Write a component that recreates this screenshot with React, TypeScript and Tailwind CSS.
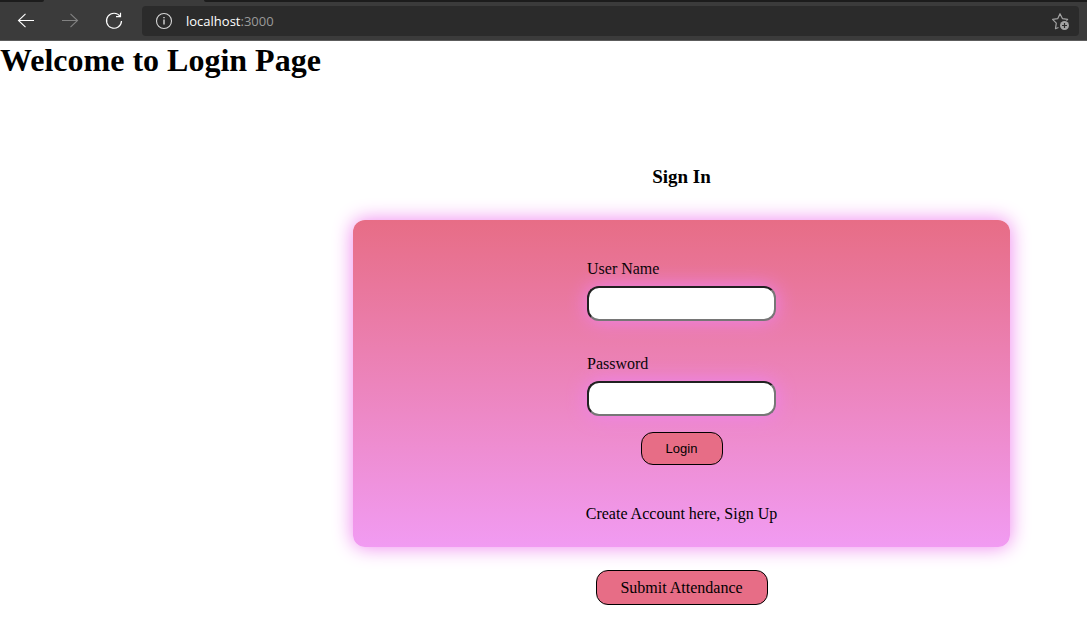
import React from 'react';

function BrowserBar() {
  return (
    <header className="bg-[#3b3b3b] border-b border-[#5c5c5c]">
      <div className="flex h-0.5">
        <div className="w-11 rounded-br-sm bg-[#1c1c1c]" />
        <div className="w-40" />
        <div className="flex-1 rounded-bl-sm bg-[#1c1c1c]" />
      </div>
      <div className="flex h-[38px] items-center pr-2 pl-4">
        <nav className="flex gap-6">
          <button type="button" aria-label="Back" className="text-white">
            <svg width="20" height="20" viewBox="0 0 20 20" fill="none" stroke="currentColor" strokeWidth="1.1">
              <path d="M18 9.5H2.5M9.5 2.8l-7 6.7 7 6.7" />
            </svg>
          </button>
          <button type="button" aria-label="Forward" className="text-[#828282]">
            <svg width="20" height="20" viewBox="0 0 20 20" fill="none" stroke="currentColor" strokeWidth="1.1">
              <path d="M2 9.5h15.5M10.5 2.8l7 6.7-7 6.7" />
            </svg>
          </button>
          <button type="button" aria-label="Refresh" className="text-white">
            <svg width="20" height="20" viewBox="0 0 20 20" fill="none" stroke="currentColor" strokeWidth="1.2">
              <path d="M16.2 5.5A7.5 7.5 0 1 0 17.500 10M16.500 1.800V5.700H12" />
            </svg>
          </button>
        </nav>
        <div className="ml-[18px] flex h-[30px] flex-1 items-center rounded bg-[#2b2b2b] pr-2 pl-3">
          <svg width="20" height="20" viewBox="0 0 20 20" fill="none" stroke="#d6d6d6" strokeWidth="1.1">
            <circle cx="10" cy="10" r="7.5" />
            <path d="M10 8.5v5M10 6v1.3" strokeWidth="1.4" />
          </svg>
          <p className="ml-3 flex-1 font-['Open_Sans','Noto_Sans',sans-serif] text-[13px] leading-5 text-white">
            localhost<span className="text-[#9a9a9a]">:3000</span>
          </p>
          <button type="button" aria-label="Add to favorites" className="text-[#a3a3a3]">
            <svg width="20" height="20" viewBox="0 0 20 20" fill="none" stroke="currentColor" strokeWidth="1.2" strokeLinejoin="round">
              <path d="M7.5 16.5l-3 1.2.8-5.600-3.700-3.700 5.200-.8L9 2.700l2.400 4.900 5.200.8-1.100 1.200" />
              <circle cx="13.5" cy="14.5" r="4.5" fill="currentColor" stroke="none" />
              <path d="M13.5 12v5M11 14.5h5" stroke="#2b2b2b" />
            </svg>
          </button>
        </div>
      </div>
    </header>
  );
}

function Field({ id, label, type }: { id: string; label: string; type: string }) {
  return (
    <div className="flex flex-col gap-2">
      <label htmlFor={id} className="text-base leading-[18px]">
        {label}
      </label>
      <input
        id={id}
        name={id}
        type={type}
        className="h-[35px] w-[189px] rounded-xl border-2 border-t-[#212121] border-r-[#767676] border-b-[#767676] border-l-[#212121] bg-white px-2 shadow-[0_0_20px_#ee82ee]"
      />
    </div>
  );
}

export default function App() {
  return (
    <div className="min-h-screen bg-white font-['Liberation_Serif',serif] text-black">
      <BrowserBar />
      <main>
        <h1 className="text-[32px] leading-[38px] font-bold">Welcome to Login Page</h1>
        <section className="mt-[87px] mr-[77px] ml-[353px] flex flex-col items-center">
          <h3 className="text-[19px] leading-[22px] font-bold">Sign In</h3>
          <form
            onSubmit={(event) => event.preventDefault()}
            className="mt-8 flex w-full flex-col items-center rounded-xl bg-linear-to-b/srgb from-[#e76d86] to-[#f19bf2] pt-10 pb-6 shadow-[0_0_20px_#ee82ee]"
          >
            <div className="flex flex-col gap-[34px]">
              <Field id="username" label="User Name" type="text" />
              <Field id="password" label="Password" type="password" />
            </div>
            <button
              type="submit"
              className="mt-4 h-[33px] w-[82px] rounded-xl border border-black bg-[#e76d86] font-['Liberation_Sans',sans-serif] text-[13px]"
            >
              Login
            </button>
            <a href="#signup" className="mt-10 text-base leading-[18px]">
              Create Account here, Sign Up
            </a>
          </form>
          <button
            type="button"
            className="mt-[23px] h-[35px] w-[172px] rounded-xl border border-black bg-[#e76d86] text-base"
          >
            Submit Attendance
          </button>
        </section>
      </main>
    </div>
  );
}
